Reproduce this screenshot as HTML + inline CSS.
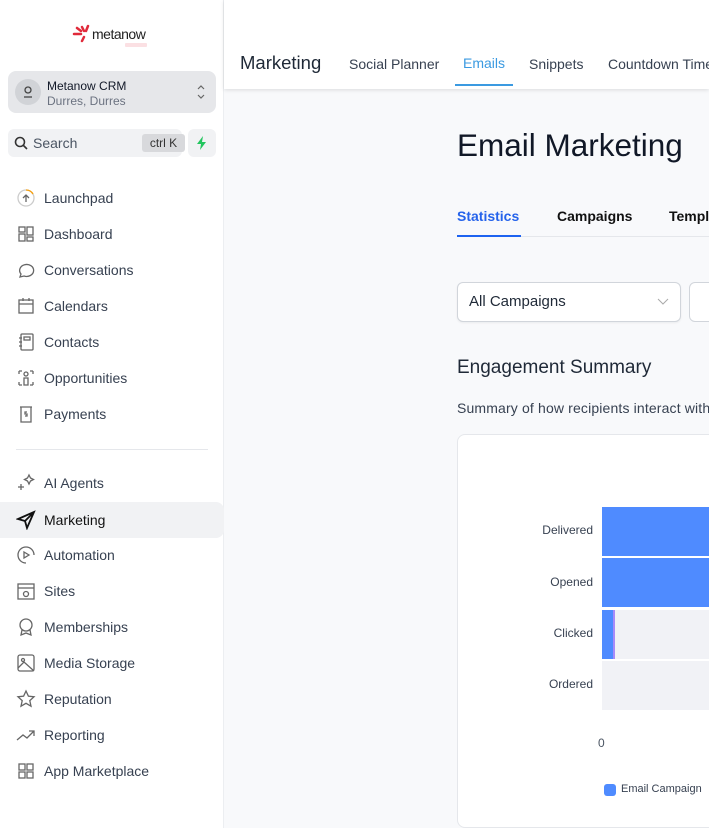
<!DOCTYPE html>
<html><head><meta charset="utf-8"><style>
*{margin:0;padding:0;box-sizing:border-box}
body{width:709px;height:828px;overflow:hidden;font-family:"Liberation Sans",sans-serif;background:#f8f9fb;position:relative}
.sb{position:absolute;left:0;top:0;width:224px;height:828px;background:#fff;border-right:1px solid #eceef1}
.abs{position:absolute}
.nav{position:absolute;left:0;width:224px;height:36px;display:flex;align-items:center;padding-left:16px;font-size:14px;color:#374151}
.nav svg{width:20px;height:20px;margin-right:8px;fill:none;stroke:#666;stroke-width:1.3}
.nav.act{background:#f1f2f4;border-radius:0 8px 8px 0;color:#111}
.nav.act svg{stroke:#111}
</style></head><body>
<div class="sb">
  <div class="abs" style="left:72px;top:22px;width:80px;height:28px">
    <svg width="22" height="20" class="abs" style="left:0;top:2px"><g stroke="#e02a3a" stroke-width="2.5" stroke-linecap="round"><line x1="2" y1="10" x2="9" y2="10"/><line x1="10" y1="3" x2="12" y2="7"/><line x1="16" y1="2" x2="14" y2="7"/><line x1="10" y1="17" x2="12" y2="13"/><line x1="5" y1="4" x2="9" y2="7"/></g></svg>
    <span class="abs" style="left:20px;top:4px;font-size:14px;letter-spacing:-0.5px;color:#222">metanow</span>
    <span class="abs" style="left:53px;top:21px;width:22px;height:4px;background:#fbe0e3;border-radius:1px"></span>
  </div>
  <div class="abs" style="left:8px;top:71px;width:208px;height:42px;background:#e6e7ea;border-radius:8px">
    <div class="abs" style="left:7px;top:8px;width:26px;height:26px;border-radius:50%;background:#d1d3d7"></div>
    <svg class="abs" style="left:14px;top:14px" width="12" height="14" fill="none" stroke="#444" stroke-width="1.3"><circle cx="6" cy="5" r="3"/><path d="M2 12h8"/></svg>
    <span class="abs" style="left:39px;top:8px;font-size:12px;color:#111827">Metanow CRM</span>
    <span class="abs" style="left:39px;top:23px;font-size:12px;color:#6b7280">Durres, Durres</span>
    <svg class="abs" style="left:188px;top:12px" width="10" height="18" fill="none" stroke="#666" stroke-width="1.2"><path d="M2 6l3-3 3 3M2 12l3 3 3-3"/></svg>
  </div>
  <div class="abs" style="left:8px;top:129px;width:174px;height:28px;background:#f1f2f4;border-radius:6px">
    <svg class="abs" style="left:6px;top:7px" width="14" height="14" fill="none" stroke="#333" stroke-width="1.6"><circle cx="6" cy="6" r="4.5"/><path d="M9.5 9.5l3.5 3.5"/></svg>
    <span class="abs" style="left:25px;top:6px;font-size:14px;color:#4b5563">Search</span>
    <span class="abs" style="left:134px;top:5px;width:43px;height:18px;background:#d8d9dc;border-radius:3px;font-size:12px;color:#333;text-align:center;line-height:18px">ctrl K</span>
  </div>
  <div class="abs" style="left:188px;top:129px;width:28px;height:28px;background:#f1f2f4;border-radius:6px">
    <svg class="abs" style="left:8px;top:7px" width="12" height="14"><path d="M7 0L1 8h4l-1 6 6-8H6z" fill="#22c55e"/></svg>
  </div>
  <div class="nav" style="top:180px"><svg viewBox="0 0 20 20"><circle cx="10" cy="10" r="8" stroke="#ccc"/><path d="M10 2a8 8 0 0 1 7 4" stroke="#f59e0b"/><path d="M10 14V7M7 10l3-3 3 3"/></svg>Launchpad</div>
  <div class="nav" style="top:216px"><svg viewBox="0 0 20 20"><rect x="3" y="3" width="6" height="5"/><rect x="11" y="3" width="6" height="8"/><rect x="3" y="10" width="6" height="7"/><rect x="11" y="13" width="6" height="4"/></svg>Dashboard</div>
  <div class="nav" style="top:252px"><svg viewBox="0 0 20 20"><path d="M4 17l1-3a7 6 0 1 1 3 2z"/></svg>Conversations</div>
  <div class="nav" style="top:288px"><svg viewBox="0 0 20 20"><rect x="3" y="4" width="14" height="13"/><path d="M3 8h14M7 2v3M13 2v3"/></svg>Calendars</div>
  <div class="nav" style="top:324px"><svg viewBox="0 0 20 20"><rect x="5" y="2" width="12" height="16" rx="1"/><rect x="8" y="5" width="6" height="3"/><path d="M3 6h3M3 10h3M3 14h3"/></svg>Contacts</div>
  <div class="nav" style="top:360px"><svg viewBox="0 0 20 20"><circle cx="10" cy="6" r="2"/><path d="M8 10h4v7H8zM3 3h3M3 3v3M17 3h-3M17 3v3M3 17h3M3 17v-3M17 17h-3M17 17v-3"/></svg>Opportunities</div>
  <div class="nav" style="top:396px"><svg viewBox="0 0 20 20"><path d="M4 3h12M5 3v15h10V3"/><path d="M11 8H9v2h2v2H9"/></svg>Payments</div>
  <div class="abs" style="left:16px;top:449px;width:192px;height:1px;background:#e5e7eb"></div>
  <div class="nav" style="top:465px"><svg viewBox="0 0 20 20"><path d="M2 14h6M5 11v6M13 2l1.5 3 3 1.5-3 1.5L13 11l-1.5-3L8.5 6.5l3-1.5z"/></svg>AI Agents</div>
  <div class="nav act" style="top:502px"><svg viewBox="0 0 20 20" style="stroke-width:1.8"><path d="M18 2L2 9l7 2 2 7z M9 11l9-9"/></svg>Marketing</div>
  <div class="nav" style="top:537px"><svg viewBox="0 0 20 20"><path d="M10 18a8 8 0 1 1 8-8"/><path d="M8 7l5 3-5 3z"/></svg>Automation</div>
  <div class="nav" style="top:573px"><svg viewBox="0 0 20 20"><rect x="2" y="3" width="16" height="15"/><path d="M2 7h16"/><circle cx="10" cy="13" r="2.5"/></svg>Sites</div>
  <div class="nav" style="top:609px"><svg viewBox="0 0 20 20"><circle cx="10" cy="8" r="6"/><path d="M6 13l-1 5 5-2 5 2-1-5"/></svg>Memberships</div>
  <div class="nav" style="top:645px"><svg viewBox="0 0 20 20"><rect x="2" y="2" width="16" height="16" rx="2"/><circle cx="7" cy="7" r="1.5"/><path d="M2 15l6-6 10 9"/></svg>Media Storage</div>
  <div class="nav" style="top:681px"><svg viewBox="0 0 20 20"><path d="M10 2l2.4 5.2 5.6.6-4.2 3.8 1.2 5.6L10 14.3 5 17.2l1.2-5.6L2 7.8l5.6-.6z"/></svg>Reputation</div>
  <div class="nav" style="top:717px"><svg viewBox="0 0 20 20"><path d="M1 15l6-5 4 3 7-7M13 6h5v5"/></svg>Reporting</div>
  <div class="nav" style="top:753px"><svg viewBox="0 0 20 20"><rect x="3" y="3" width="6" height="6"/><rect x="11" y="3" width="6" height="6"/><rect x="3" y="11" width="6" height="6"/><rect x="11" y="11" width="6" height="6"/></svg>App Marketplace</div>
</div>
<div class="abs" style="left:224px;top:0;width:485px;height:89px;background:#fff;box-shadow:0 1px 4px rgba(0,0,0,.12)">
  <span class="abs" style="left:16px;top:52px;font-size:18.5px;color:#1f2937">Marketing</span>
  <span class="abs" style="left:125px;top:56px;font-size:14px;color:#374151">Social Planner</span>
  <span class="abs" style="left:239px;top:55px;font-size:14px;color:#3b9ae1">Emails</span>
  <div class="abs" style="left:231px;top:84px;width:58px;height:2px;background:#3b9ae1"></div>
  <span class="abs" style="left:305px;top:56px;font-size:14px;color:#374151">Snippets</span>
  <span class="abs" style="left:384px;top:56px;font-size:14px;color:#374151;white-space:nowrap">Countdown Timers</span>
</div>
<div class="abs" style="left:457px;top:127px;font-size:31.5px;color:#111827">Email Marketing</div>
<span class="abs" style="left:457px;top:208px;font-size:14px;font-weight:bold;color:#2563eb">Statistics</span>
<span class="abs" style="left:557px;top:208px;font-size:14px;font-weight:bold;color:#111">Campaigns</span>
<span class="abs" style="left:669px;top:208px;font-size:14px;font-weight:bold;color:#111">Templates</span>
<div class="abs" style="left:457px;top:236px;width:252px;height:1px;background:#e5e7eb"></div>
<div class="abs" style="left:457px;top:235px;width:64px;height:2px;background:#1d62f0"></div>
<div class="abs" style="left:457px;top:282px;width:224px;height:40px;background:#fff;border:1px solid #d1d5db;border-radius:6px;box-shadow:0 1px 2px rgba(0,0,0,.06)">
  <span class="abs" style="left:11px;top:10px;font-size:15px;color:#1f2937">All Campaigns</span>
  <svg class="abs" style="left:199px;top:15px" width="12" height="8" fill="none" stroke="#aaa"><path d="M1 1l5 5 5-5"/></svg>
</div>
<div class="abs" style="left:689px;top:282px;width:40px;height:40px;background:#fff;border:1px solid #d1d5db;border-radius:6px"></div>
<span class="abs" style="left:457px;top:357px;font-size:19px;color:#1f2937">Engagement Summary</span>
<span class="abs" style="left:457px;top:400px;font-size:14px;color:#374151;white-space:nowrap;letter-spacing:0.15px">Summary of how recipients interact with</span>
<div class="abs" style="left:457px;top:434px;width:260px;height:394px;background:#fff;border:1px solid #e5e7eb;border-radius:8px">
  <div class="abs" style="left:144px;top:72px;width:120px;height:49px;background:#4f8bff"></div>
  <div class="abs" style="left:144px;top:123px;width:120px;height:49px;background:#4f8bff"></div>
  <div class="abs" style="left:144px;top:175px;width:120px;height:49px;background:#f1f2f6"></div>
  <div class="abs" style="left:144px;top:175px;width:13px;height:49px;background:#4f8bff;border-right:2px solid #a78bfa"></div>
  <div class="abs" style="left:144px;top:226px;width:120px;height:49px;background:#f1f2f6"></div>
  <span class="abs" style="right:123px;top:88px;font-size:12px;color:#374151">Delivered</span>
  <span class="abs" style="right:123px;top:140px;font-size:12px;color:#374151">Opened</span>
  <span class="abs" style="right:123px;top:191px;font-size:12px;color:#374151">Clicked</span>
  <span class="abs" style="right:123px;top:242px;font-size:12px;color:#374151">Ordered</span>
  <span class="abs" style="left:140px;top:301px;font-size:12px;color:#4b5563">0</span>
  <div class="abs" style="left:146px;top:349px;width:12px;height:12px;border-radius:3px;background:#4f8bff"></div>
  <span class="abs" style="left:163px;top:348px;font-size:11px;color:#374151;white-space:nowrap">Email Campaign</span>
</div>
</body></html>
